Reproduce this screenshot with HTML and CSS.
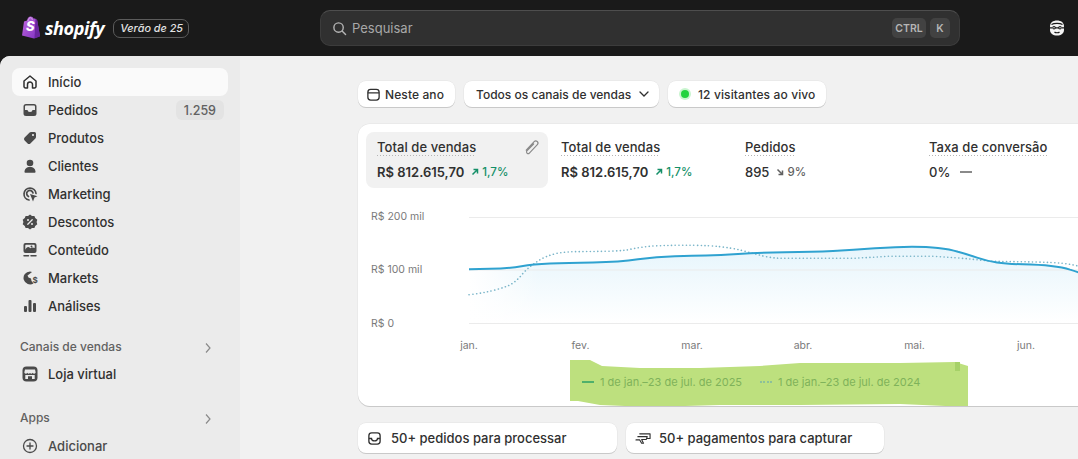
FILE: index.html
```html
<!DOCTYPE html>
<html lang="pt-BR">
<head>
<meta charset="utf-8">
<title>Shopify</title>
<link rel="stylesheet" href="styles.css">
</head>
<body>
<header class="topbar">
  <div class="brand">
    <svg class="bag" viewBox="0 0 20 23" width="20" height="23">
      <defs><linearGradient id="bagg" x1="0" y1="0" x2="1" y2="1"><stop offset="0" stop-color="#c46ae0"/><stop offset="1" stop-color="#7c2fc0"/></linearGradient></defs>
      <path d="M1 19.500 3 5.500 6 4.500C6.500 2 8 .5 9.500.5 11 .5 12 1.200 12.500 2.500L14 2.600 16 4 19 20 13 22.500Z" fill="url(#bagg)"/>
      <path d="M13.500 22.400 19 20.600 16.300 4.300 14.500 3Z" fill="#6a259f"/>
      <path d="M7 5C7.300 3 8.500 1.500 9.800 1.700 10.800 1.900 11.300 3 11.300 4" fill="none" stroke="#d9b4ea" stroke-width=".9"/>
    </svg>
    <span class="bag-s">S</span>
    <span class="wordmark">shopify</span>
    <span class="season">Verão de 25</span>
  </div>
  <div class="search">
    <svg class="search-icon" viewBox="0 0 16 16" width="15" height="15"><circle cx="7" cy="7" r="5" fill="none" stroke="#b5b5b5" stroke-width="1.500"/><path d="m11 11 3.500 3.500" stroke="#b5b5b5" stroke-width="1.500" stroke-linecap="round"/></svg>
    <span class="search-text">Pesquisar</span>
    <kbd class="key key-wide">CTRL</kbd>
    <kbd class="key">K</kbd>
  </div>
  <div class="account">
    <svg viewBox="0 0 16 16" width="16" height="16">
      <path d="M8 .5C12 .5 15 2.500 15 6.500V10C15 13.500 12 15.500 8 15.500S1 13.500 1 10V6.500C1 2.500 4 .5 8 .5Z" fill="#f4f4f4"/>
      <path d="M2.500 4.500C5 3 11 3 13.500 4.500" stroke="#1a1a1a" stroke-width="1.200" fill="none"/>
      <circle cx="5" cy="7.800" r="1.800" fill="#1a1a1a"/><circle cx="11" cy="7.800" r="1.800" fill="#1a1a1a"/>
      <circle cx="5" cy="7.800" r=".7" fill="#f4f4f4"/><circle cx="11" cy="7.800" r=".7" fill="#f4f4f4"/>
      <path d="M6 7.800h4M1 7.800h2M13 7.800h2" stroke="#1a1a1a" stroke-width="1.200"/>
      <path d="M5.500 12C6.500 13 9.500 13 10.500 12" stroke="#1a1a1a" stroke-width="1.200" fill="none"/>
    </svg>
  </div>
</header>

<div class="shell">
  <nav class="sidebar">
    <a class="item active"><svg class="ico" viewBox="0 0 16 16"><path d="M2 7 8 2l6 5v5.500A1.500 1.500 0 0 1 12.500 14H10.500V10.500a2.500 2.500 0 0 0-5 0V14H3.500A1.500 1.500 0 0 1 2 12.500Z" fill="none" stroke="#303030" stroke-width="1.500" stroke-linejoin="round"/></svg><span>Início</span></a>
    <a class="item"><svg class="ico" viewBox="0 0 16 16"><path d="M4 2h8a2.500 2.500 0 0 1 2.500 2.500v7A2.500 2.500 0 0 1 12 14H4a2.500 2.500 0 0 1-2.500-2.500v-7A2.500 2.500 0 0 1 4 2Z" fill="#4a4a4a"/><path d="M3 8V4.800C3 4 3.500 3.500 4.300 3.500h7.400c.8 0 1.300.5 1.300 1.300V8h-2.500a2.500 2 0 0 1-5 0Z" fill="#ebebeb"/></svg><span>Pedidos</span><b class="badge">1.259</b></a>
    <a class="item"><svg class="ico" viewBox="0 0 16 16"><path d="M9 2h3.500A1.500 1.500 0 0 1 14 3.500V7a2 2 0 0 1-.6 1.400l-5 5a2 2 0 0 1-2.800 0l-3-3a2 2 0 0 1 0-2.800l5-5A2 2 0 0 1 9 2Z" fill="#4a4a4a"/><circle cx="11" cy="5" r="1.100" fill="#ebebeb"/></svg><span>Produtos</span></a>
    <a class="item"><svg class="ico" viewBox="0 0 16 16"><circle cx="8" cy="5" r="3.300" fill="#4a4a4a"/><path d="M2.500 14c0-3 2-5 5.500-5s5.500 2 5.500 5c0 .4-.3.7-.7.7H3.200c-.4 0-.7-.3-.7-.7Z" fill="#4a4a4a"/></svg><span>Clientes</span></a>
    <a class="item"><svg class="ico" viewBox="0 0 16 16"><path d="M7 14A6 6 0 1 1 14 7.500" fill="none" stroke="#4a4a4a" stroke-width="1.700" stroke-linecap="round"/><path d="M6.500 10.500A3.200 3.200 0 1 1 11 7" fill="none" stroke="#4a4a4a" stroke-width="1.700" stroke-linecap="round"/><path d="m8 8 7.500 2.300-3 1.200L11 15.500Z" fill="#4a4a4a"/></svg><span>Marketing</span></a>
    <a class="item"><svg class="ico" viewBox="0 0 16 16"><path d="M8 .5l2 1.500 2.400-.1.800 2.200L15.300 5.800 14.600 8l.7 2.200-2.100 1.700-.8 2.200-2.400-.1L8 15.500 6 14l-2.400.1-.8-2.200L.7 10.200 1.400 8 .7 5.800l2.100-1.700.8-2.200L6 2Z" fill="#4a4a4a"/><path d="m5.800 10.200 4.400-4.400" stroke="#ebebeb" stroke-width="1.300" stroke-linecap="round"/><circle cx="6" cy="6" r="1" fill="#ebebeb"/><circle cx="10" cy="10" r="1" fill="#ebebeb"/></svg><span>Descontos</span></a>
    <a class="item"><svg class="ico" viewBox="0 0 16 16"><rect x="1.500" y="1" width="13" height="10" rx="2" fill="#4a4a4a"/><path d="M3.300 7.800c1.500-3 3-3.500 5-1.500 1.200-1 3-1 4.400-.3V3.800c0-.6-.4-1-1-1H4.300c-.6 0-1 .4-1 1Z" fill="#ebebeb"/><circle cx="9.500" cy="4.400" r="1" fill="#4a4a4a"/><path d="M2 13.700h4.500M9 13.700h5" stroke="#4a4a4a" stroke-width="1.500" stroke-linecap="round"/></svg><span>Conteúdo</span></a>
    <a class="item"><svg class="ico" viewBox="0 0 16 16"><path d="M8 1.500A6.500 6.500 0 1 0 11.500 13.500L9.500 11 9 8.500 6.500 7.500 5.500 5.500 7.500 4 10 2Z" fill="#4a4a4a"/><text x="10.500" y="12.500" class="ico-dollar">$</text></svg><span>Markets</span></a>
    <a class="item"><svg class="ico" viewBox="0 0 16 16"><rect x="2" y="8" width="3" height="6" rx="1" fill="#4a4a4a"/><rect x="6.500" y="2" width="3" height="12" rx="1" fill="#4a4a4a"/><rect x="11" y="5" width="3" height="9" rx="1" fill="#4a4a4a"/></svg><span>Análises</span></a>

    <div class="section section-first"><span>Canais de vendas</span><svg class="chev" viewBox="0 0 10 12" width="10" height="12"><path d="m3 1.500 4 4.500-4 4.500" fill="none" stroke="#8a8a8a" stroke-width="1.200"/></svg></div>
    <a class="item"><svg class="ico" viewBox="0 0 16 16"><rect x="0.500" y="0.500" width="15" height="15" rx="4" fill="#4a4a4a"/><path d="M3 3.500h10l.7 3a1.600 1.600 0 0 1-3 .3 1.700 1.700 0 0 1-2.700.2 1.700 1.700 0 0 1-2.700-.2 1.600 1.600 0 0 1-3-.3Z" fill="#ebebeb"/><path d="M3.300 9H12.700V13H10V10.300H6V13H3.300Z" fill="#ebebeb"/></svg><span class="strong">Loja virtual</span></a>

    <div class="section section-apps"><span>Apps</span><svg class="chev" viewBox="0 0 10 12" width="10" height="12"><path d="m3 1.500 4 4.500-4 4.500" fill="none" stroke="#8a8a8a" stroke-width="1.200"/></svg></div>
    <a class="item muted"><svg class="ico" viewBox="0 0 16 16"><circle cx="8" cy="8" r="6.500" fill="none" stroke="#4a4a4a" stroke-width="1.300"/><path d="M8 5v6M5 8h6" stroke="#4a4a4a" stroke-width="1.300" stroke-linecap="round"/></svg><span>Adicionar</span></a>
  </nav>

  <main class="main">
    <div class="filters">
      <button class="btn btn-date"><svg viewBox="0 0 16 16" width="15" height="15"><rect x="2" y="2.500" width="12" height="11.500" rx="3" fill="none" stroke="#303030" stroke-width="1.400"/><path d="M2 6.300h12" stroke="#303030" stroke-width="1.400"/></svg>Neste ano</button>
      <button class="btn btn-channel">Todos os canais de vendas<svg viewBox="0 0 12 12" width="12" height="12"><path d="m2 4 4 4 4-4" fill="none" stroke="#303030" stroke-width="1.300" stroke-linecap="round"/></svg></button>
      <button class="btn btn-live"><i class="live-dot"></i>12 visitantes ao vivo</button>
    </div>

    <section class="card">
      <div class="tiles">
        <div class="tile tile-active">
          <span class="tile-label">Total de vendas</span>
          <svg class="pencil" viewBox="0 0 16 16" width="17" height="17"><path d="M3 10.500 10.500 2.500a2 2 0 0 1 3 2.800L6 13.200a1.500 1.500 0 0 1-2.300-2L10 4.700" fill="none" stroke="#8a8a8a" stroke-width="1.100" stroke-linecap="round"/></svg>
          <div class="tile-value">R$ 812.615,70 <em class="trend up"><svg viewBox="0 0 8 8" width="8" height="8"><path d="M1.500 6.500 6 2M2.500 1.500H6.500V5.500" fill="none" stroke="#148f68" stroke-width="1.500"/></svg>1,7%</em></div>
        </div>
        <div class="tile">
          <span class="tile-label">Total de vendas</span>
          <div class="tile-value">R$ 812.615,70 <em class="trend up"><svg viewBox="0 0 8 8" width="8" height="8"><path d="M1.500 6.500 6 2M2.500 1.500H6.500V5.500" fill="none" stroke="#148f68" stroke-width="1.500"/></svg>1,7%</em></div>
        </div>
        <div class="tile">
          <span class="tile-label">Pedidos</span>
          <div class="tile-value light">895 <em class="trend down"><svg viewBox="0 0 8 8" width="8" height="8"><path d="M1.500 1.500 6 6M2.500 6.500H6.500V2.500" fill="none" stroke="#616161" stroke-width="1.500"/></svg>9%</em></div>
        </div>
        <div class="tile">
          <span class="tile-label">Taxa de conversão</span>
          <div class="tile-value light">0% <i class="dash"></i></div>
        </div>
      </div>

      <svg class="chart" viewBox="358 200 720 154" width="720" height="154">
        <defs>
          <linearGradient id="areag" x1="0" y1="0" x2="0" y2="1"><stop offset="0" stop-color="#e6f5fc"/><stop offset="1" stop-color="#ffffff"/></linearGradient>
          <linearGradient id="fadeg" x1="0" y1="0" x2="1" y2="0"><stop offset="0" stop-color="#fff"/><stop offset="1" stop-color="#fff" stop-opacity="0"/></linearGradient>
        </defs>
        <path d="M469 269.300L490 268.800Q510 268.300 521.500 266.300Q533 264.300 550 263.600Q567 263 593 262.500Q620 262 638 259.300Q657 256.700 675 256.200Q693 255.700 706 255.600Q720 255.500 738 254.100Q757 252.700 785 252.300Q813 252 833 251Q853 250 875 248.300Q897 246.700 912 246.700Q927 246.700 938 248Q950 249.300 958 251.800Q967 254.300 977 257.600Q987 261 997 262.500Q1007 264 1023 264.300Q1040 264.700 1051 266Q1063 267.300 1070 269.600Q1078 272 1085 275V323H469Z" fill="url(#areag)"/>
        <rect x="469" y="255" width="70" height="69" fill="url(#fadeg)"/>
        <path d="M469 217.500H1078M469 270H1078M469 323.500H1078" stroke="#ebebeb" stroke-width="1"/>
        <path d="M469 294.700Q493 292 510 285Q518 280 523 273.300Q530 266 537 261.700Q545 256 557 253.300Q565 252 573 251.700L607 251.300Q618 251 627 250Q640 247 653 246Q675 245 693 245.300Q710 245.500 720 246.700Q732 248 740 250Q752 253 763 256Q772 258 780 258.300L853 258.300Q870 257.500 887 256.300L933 256.300Q955 257.500 973 259.300Q983 260.500 993 261.300L1037 262Q1052 262.500 1063 263.300Q1072 264.500 1078 266" fill="none" stroke="#7ab5c9" stroke-width="1.600" stroke-dasharray="0.100 3.600" stroke-linecap="round"/>
        <path d="M469 269.300L490 268.800Q510 268.300 521.500 266.300Q533 264.300 550 263.600Q567 263 593 262.500Q620 262 638 259.300Q657 256.700 675 256.200Q693 255.700 706 255.600Q720 255.500 738 254.100Q757 252.700 785 252.300Q813 252 833 251Q853 250 875 248.300Q897 246.700 912 246.700Q927 246.700 938 248Q950 249.300 958 251.800Q967 254.300 977 257.600Q987 261 997 262.500Q1007 264 1023 264.300Q1040 264.700 1051 266Q1063 267.300 1070 269.600Q1078 272 1085 275" fill="none" stroke="#2fa2d0" stroke-width="2"/>
        <text x="371" y="220" class="axis">R$ 200 mil</text>
        <text x="371" y="273" class="axis">R$ 100 mil</text>
        <text x="371" y="327" class="axis">R$ 0</text>
        <text x="469" y="349" class="axis mid">jan.</text>
        <text x="580.500" y="349" class="axis mid">fev.</text>
        <text x="692" y="349" class="axis mid">mar.</text>
        <text x="803" y="349" class="axis mid">abr.</text>
        <text x="914.500" y="349" class="axis mid">mai.</text>
        <text x="1026" y="349" class="axis mid">jun.</text>
      </svg>

      <div class="legend">
        <svg class="scribble" viewBox="0 0 398 47" width="398" height="47"><path d="M0 0H20L32 6 70 8H130L190 6 230 3 330 3 385 2 398 6V47L330 44 230 45 150 45 80 47 30 45 8 41H0Z" fill="#bde07e"/><rect x="385" y="2" width="5" height="9" fill="#a6d168"/></svg>
        <span class="legend-item first"><i class="key-solid"></i>1 de jan.–23 de jul. de 2025</span>
        <span class="legend-item"><i class="key-dots"></i>1 de jan.–23 de jul. de 2024</span>
      </div>
    </section>

    <div class="actions">
      <button class="btn action action-a"><svg viewBox="0 0 16 16" width="15" height="15"><rect x="2" y="2" width="12" height="12" rx="3" fill="none" stroke="#303030" stroke-width="1.400"/><path d="M2 8h2.800a3.200 2.600 0 0 0 6.400 0H14" fill="none" stroke="#303030" stroke-width="1.400"/></svg>50+ pedidos para processar</button>
      <button class="btn action action-b"><svg viewBox="0 0 18 16" width="17" height="15"><path d="M5 3h11v5H13M3 6h10l-1 3H7l2 4H7L5 9.500H1" fill="none" stroke="#303030" stroke-width="1.200" stroke-linejoin="round" stroke-linecap="round"/></svg>50+ pagamentos para capturar</button>
    </div>
  </main>
</div>
</body>
</html>
```
FILE: styles.css
```css
* { box-sizing: border-box; }
html, body { margin: 0; height: 100%; }
body {
  width: 1078px;
  height: 459px;
  overflow: hidden;
  background: #1a1a1a;
  font-family: Inter, "Liberation Sans", sans-serif;
  font-size: 13px;
  color: #303030;
  display: flex;
  flex-direction: column;
}

/* top bar */
.topbar {
  height: 56px;
  flex: none;
  display: grid;
  grid-template-columns: 320px 640px 1fr;
  align-items: center;
  background: #1a1a1a;
}
.brand { display: flex; align-items: center; padding-left: 21px; position: relative; }
.bag { flex: none; margin-top: -2px; }
.bag-s {
  position: absolute;
  left: 26px;
  top: 2px;
  color: #fff;
  font: italic 800 13px Inter, sans-serif;
}
.wordmark {
  margin-left: 4px;
  color: #fff;
  font: italic 700 18px "Open Sans", sans-serif;
  letter-spacing: -0.4px;
}
.season {
  margin-left: 9px;
  height: 19px;
  padding: 0 5px 0 6px;
  display: flex;
  align-items: center;
  border: 1px solid #5c5c5c;
  border-radius: 7px;
  color: #e3e3e3;
  font-size: 10.800px;
  font-style: italic;
  font-weight: 500;
}
.search {
  height: 36px;
  display: flex;
  align-items: center;
  gap: 4px;
  padding: 0 9px 0 11px;
  background: #303030;
  border: 1px solid #3c3c3c;
  border-top-color: #4e4e4e;
  border-radius: 10px;
}
.search-text { flex: 1; margin-left: 1px; color: #a8a8a8; font-size: 13px; }
.key {
  height: 20px;
  padding: 0 4px;
  min-width: 20px;
  display: flex;
  align-items: center;
  justify-content: center;
  background: #424242;
  border-radius: 5px;
  color: #b5b5b5;
  font: 600 10.500px Inter, sans-serif;
}
.key-wide { width: 34px; }
.account { display: flex; justify-content: flex-end; padding-right: 13px; }
.account svg { display: block; }

/* shell */
.shell {
  flex: 1;
  min-height: 0;
  display: flex;
  background: #f1f1f1;
  border-top-left-radius: 10px;
  overflow: hidden;
}
.sidebar {
  width: 240px;
  flex: none;
  background: #ebebeb;
  padding: 12px 12px 0;
}
.item {
  height: 28px;
  display: flex;
  align-items: center;
  padding: 0 4px 0 10px;
  border-radius: 8px;
  color: #303030;
  font-size: 13px;
  font-weight: 500;
}
.item.active { background: #fafafa; }
.item .strong { font-weight: 550; }
.item.muted span { color: #4a4a4a; }
.ico { width: 16px; height: 16px; flex: none; margin-right: 10px; }
.ico-dollar { font: 700 8px Inter, sans-serif; fill: #4a4a4a; }
.badge {
  margin-left: auto;
  height: 20px;
  padding: 0 8px;
  display: flex;
  align-items: center;
  background: #e3e3e3;
  border-radius: 6px;
  color: #616161;
  font-size: 12.500px;
  font-weight: 450;
}
.section {
  height: 28px;
  display: flex;
  align-items: center;
  justify-content: space-between;
  padding: 0 15px 0 8px;
  color: #616161;
  font-size: 12px;
  font-weight: 550;
}
.section-first { margin-top: 12px; }
.section-apps { margin-top: 15px; margin-bottom: 1px; }
.chev { margin-top: 3px; }

/* main */
.main {
  flex: 1;
  min-width: 0;
  padding: 25px 0 0 118px;
  overflow: hidden;
}
.filters { display: flex; gap: 9px; }
.btn {
  height: 26px;
  display: flex;
  align-items: center;
  background: #fff;
  border: 0;
  border-radius: 8px;
  box-shadow: 0 1px 0 #c9c9c9, 0 0 0 .5px #e3e3e3;
  color: #303030;
  font: 500 12px Inter, sans-serif;
  white-space: nowrap;
}
.btn-date { width: 97px; padding: 0 0 0 8px; gap: 4px; letter-spacing: .1px; }
.btn-channel { width: 195px; padding: 0 0 0 12px; gap: 7px; }
.btn-live { width: 158px; padding: 0 0 0 13px; gap: 9px; letter-spacing: .12px; }
.live-dot {
  width: 8px;
  height: 8px;
  border-radius: 50%;
  background: #22d33f;
  box-shadow: 0 0 0 2px #c9f5cf;
}

.card {
  width: 800px;
  height: 282px;
  margin-top: 17px;
  padding: 8px;
  background: #fff;
  border-radius: 12px;
  box-shadow: 0 1px 0 #c9c9c9, 0 0 0 .5px #e3e3e3;
  overflow: hidden;
}
.tiles { display: flex; gap: 2px; }
.tile {
  position: relative;
  width: 182px;
  height: 56px;
  padding: 7px 11px;
  border-radius: 8px;
  flex: none;
}
.tile-active { background: #f1f1f1; }
.tile-label {
  display: inline-block;
  height: 17px;
  line-height: 16px;
  color: #303030;
  font-size: 13px;
  font-weight: 500;
  letter-spacing: .07px;
  background: repeating-linear-gradient(90deg, #b5b5b5 0 1px, transparent 1px 3px) left bottom / 100% 1px no-repeat;
}
.pencil { position: absolute; right: 8px; top: 7px; }
.tile-value {
  margin-top: 8px;
  color: #303030;
  font-size: 13px;
  font-weight: 600;
  display: flex;
  align-items: center;
  gap: 7px;
  white-space: nowrap;
}
.tile-value.light { font-weight: 500; }
.trend { display: flex; align-items: center; gap: 3px; font-style: normal; font-size: 11.500px; font-weight: 500; }
.trend.up { color: #148f68; }
.trend.down { color: #616161; }
.dash { width: 12px; height: 1.500px; background: #8a8a8a; margin-left: 3px; }

.chart { display: block; margin: 12px 0 0 -8px; }
.axis { font: 400 10.500px Inter, sans-serif; fill: #7a7a7a; }
.axis.mid { text-anchor: middle; }

.legend {
  position: relative;
  height: 47px;
  margin: 6px 0 0 204px;
  width: 398px;
  display: flex;
  align-items: center;
  color: #7fb25a;
  font-size: 11px;
  padding: 0 0 3px 12px;
  gap: 18px;
}
.scribble { position: absolute; left: 0; top: 0; }
.legend-item { position: relative; display: flex; align-items: center; gap: 6px; white-space: nowrap; }
.key-solid { width: 12px; height: 2px; background: #4fb06b; }
.key-dots { width: 12px; border-top: 2px dotted #8dc09a; }

.actions { display: flex; gap: 9px; margin-top: 17px; }
.action { height: 30px; font-size: 13px; gap: 9px; padding-left: 9px; }
.action-a { width: 259px; }
.action-b { width: 258px; gap: 7px; }
```
